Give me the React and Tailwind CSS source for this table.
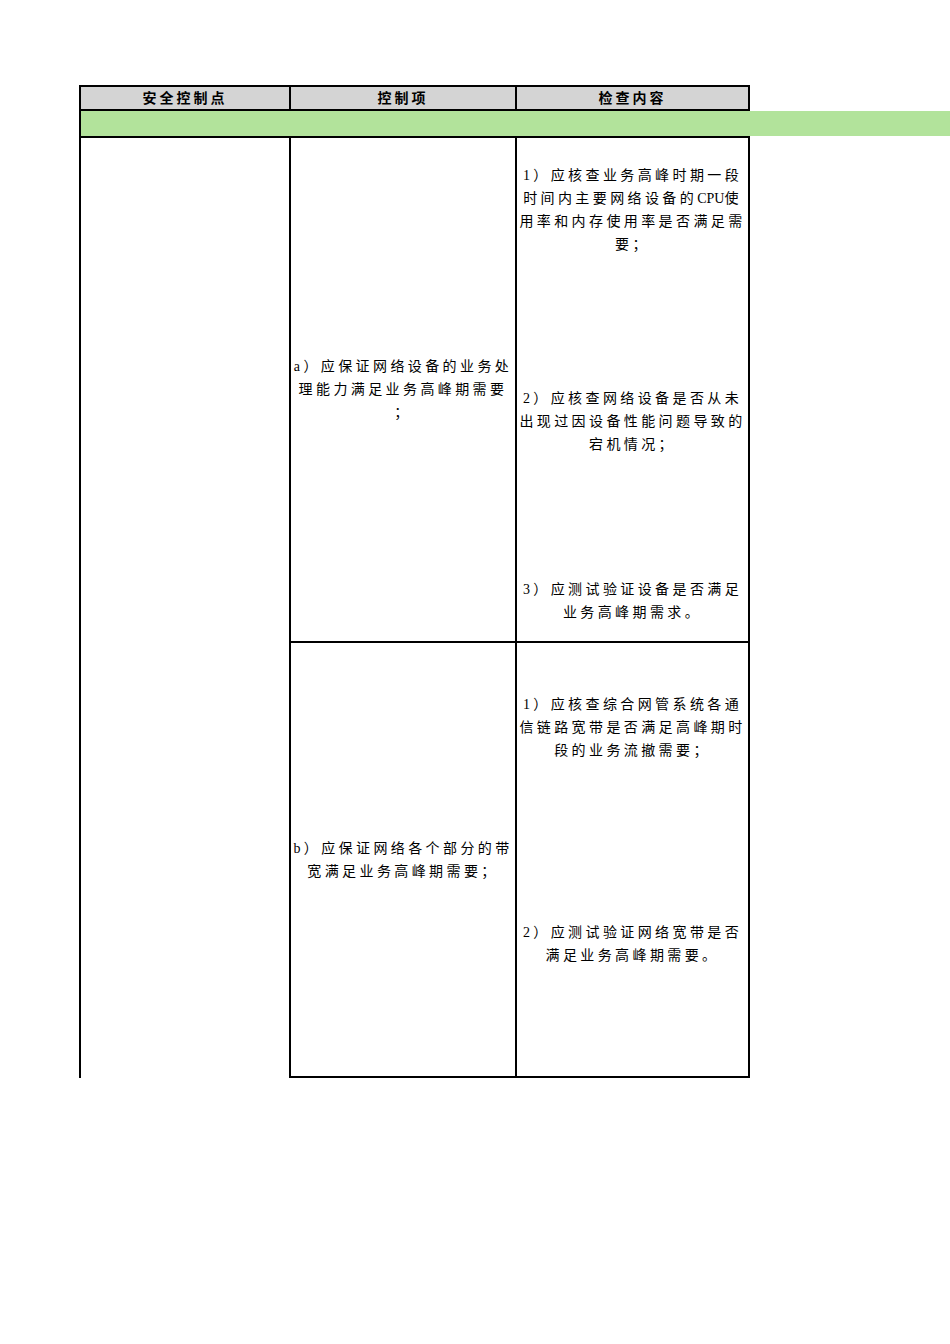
const font = { fontFamily: '"Liberation Serif", "Noto Sans CJK SC", serif' };

function Lines({ lines }) {
  return (
    <div className="text-center text-[14px] leading-[23px] tracking-[3.4px] text-black">
      {lines.map((l, i) => (
        <div key={i} className="whitespace-nowrap">
          {l}
        </div>
      ))}
    </div>
  );
}

function SubCell({ h, lines }) {
  return (
    <div className={`flex items-center justify-center ${h}`}>
      <Lines lines={lines} />
    </div>
  );
}

export default function App() {
  return (
    <div className="min-h-[1344px] w-[950px] bg-white pt-[85px]" style={font}>
      {/* header */}
      <div className="ml-[79px] flex h-[26px] w-[671px] border-2 border-black bg-[#d4d4d4] text-[14px] font-bold tracking-[3px] text-black">
        <div className="flex w-[210px] items-center justify-center border-r-2 border-black">安全控制点</div>
        <div className="flex w-[226px] items-center justify-center border-r-2 border-black">控制项</div>
        <div className="flex flex-1 items-center justify-center">检查内容</div>
      </div>

      {/* green band */}
      <div className="ml-[79px] h-[25px] border-l-2 border-black bg-[#b2e39b]" />

      {/* body */}
      <div className="ml-[79px] flex w-[671px] border-t-2 border-black">
        <div className="w-[210px] border-l-2 border-black" />
        <div className="flex w-[461px] flex-col">
          <div className="flex h-[505px] border-x-2 border-b-2 border-black">
            <div className="flex w-[226px] items-center justify-center border-r-2 border-black">
              <Lines lines={["a）应保证网络设备的业务处", "理能力满足业务高峰期需要", "；"]} />
            </div>
            <div className="flex flex-1 flex-col">
              <SubCell
                h="h-[144px]"
                lines={[
                  "1）应核查业务高峰时期一段",
                  <>
                    时间内主要网络设备的<span className="tracking-normal">CPU</span>使
                  </>,
                  "用率和内存使用率是否满足需",
                  "要；",
                ]}
              />
              <SubCell
                h="h-[278px]"
                lines={["2）应核查网络设备是否从未", "出现过因设备性能问题导致的", "宕机情况；"]}
              />
              <SubCell h="h-[81px]" lines={["3）应测试验证设备是否满足", "业务高峰期需求。"]} />
            </div>
          </div>
          <div className="flex h-[435px] border-x-2 border-b-2 border-black">
            <div className="flex w-[226px] items-center justify-center border-r-2 border-black">
              <Lines lines={["b）应保证网络各个部分的带", "宽满足业务高峰期需要；"]} />
            </div>
            <div className="flex flex-1 flex-col">
              <SubCell
                h="h-[168px]"
                lines={["1）应核查综合网管系统各通", "信链路宽带是否满足高峰期时", "段的业务流撤需要；"]}
              />
              <SubCell h="h-[265px]" lines={["2）应测试验证网络宽带是否", "满足业务高峰期需要。"]} />
            </div>
          </div>
        </div>
      </div>
    </div>
  );
}
